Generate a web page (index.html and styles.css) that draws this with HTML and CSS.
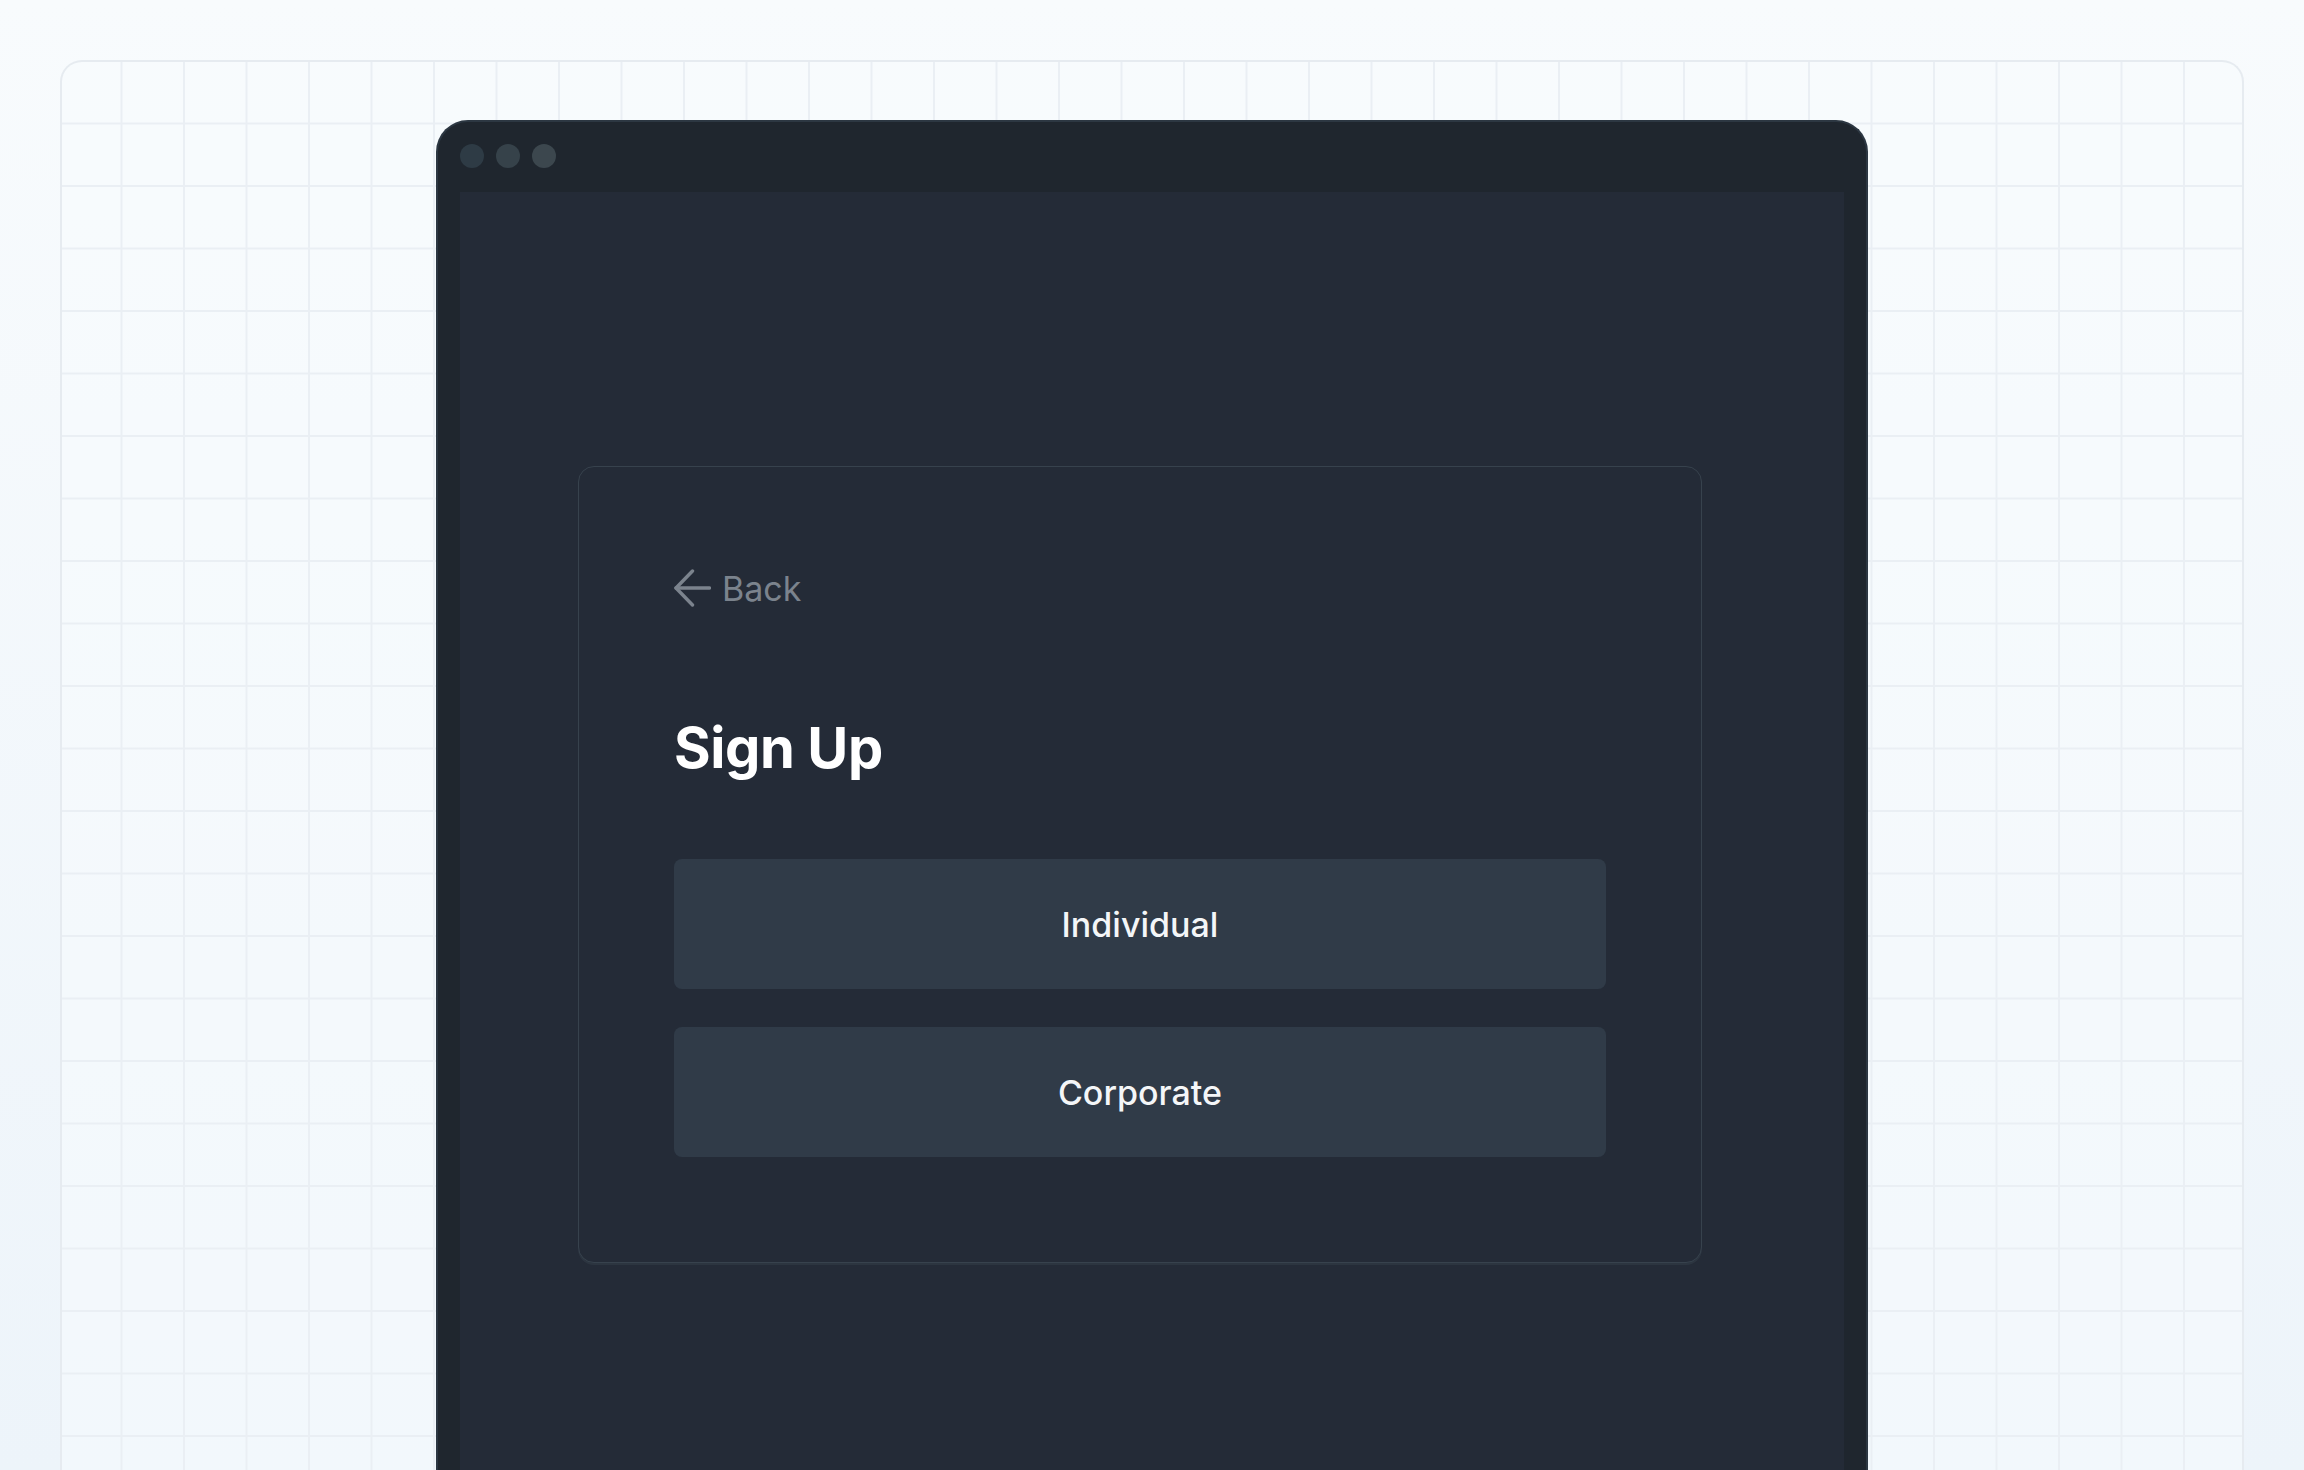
FILE: index.html
```html
<!DOCTYPE html>
<html lang="en">
<head>
<meta charset="utf-8">
<title>Sign Up</title>
<link rel="stylesheet" href="styles.css">
</head>
<body>
<div class="canvas">
  <div class="device">
    <div class="titlebar">
      <span class="dot dot-1"></span>
      <span class="dot dot-2"></span>
      <span class="dot dot-3"></span>
    </div>
    <div class="screen">
      <div class="card">
        <a class="back" href="#">
          <svg class="back-icon" width="37" height="38" viewBox="0 0 37 38" fill="none" stroke="currentColor" stroke-width="3.4" stroke-linecap="round" stroke-linejoin="round">
            <path d="M35.5 19H2"/>
            <path d="M18.5 2L2 19L18.5 36"/>
          </svg>
          <span>Back</span>
        </a>
        <h1 class="title">Sign Up</h1>
        <div class="options">
          <button class="option">Individual</button>
          <button class="option">Corporate</button>
        </div>
      </div>
    </div>
  </div>
</div>
</body>
</html>
```
FILE: styles.css
```css
* { box-sizing: border-box; }

html, body {
  margin: 0;
  height: 1470px;
  overflow: hidden;
}

body {
  background: linear-gradient(180deg, #f8fbfd 0%, #edf4fa 100%);
  font-family: Inter, "Noto Sans", "Liberation Sans", sans-serif;
}

.canvas {
  margin: 60px 60px 0;
  height: 1410px;
  border: 2px solid #e6ebf0;
  border-bottom: none;
  border-radius: 22px 22px 0 0;
  padding-top: 58px;
  background-color: rgba(248, 251, 253, 0.5);
  background-image:
    linear-gradient(to right, transparent calc(100% - 2px), #eaeff4 calc(100% - 2px)),
    linear-gradient(to bottom, transparent calc(100% - 2px), #eaeff4 calc(100% - 2px));
  background-size: 62.5px 62.5px;
  background-position: -2px 0;
}

.device {
  width: 1432px;
  margin: 0 auto;
  height: 1350px;
  background: #1f262e;
  border: 2px solid #2c3742;
  border-bottom: none;
  border-radius: 32px 32px 0 0;
  display: flex;
  flex-direction: column;
}

.titlebar {
  height: 70px;
  flex: none;
  display: flex;
  align-items: center;
  gap: 12px;
  padding: 0 22px 2px;
}

.dot {
  width: 24px;
  height: 24px;
  border-radius: 50%;
}
.dot-1 { background: #2e3b45; }
.dot-2 { background: #36424a; }
.dot-3 { background: #3c474e; }

.screen {
  flex: 1;
  margin: 0 22px;
  background: #242b37;
  padding-top: 274px;
  padding-left: 118px;
}

.card {
  width: 1124px;
  border: 1px solid #37424d;
  border-radius: 16px;
  padding: 95px 95px 105px;
  background: #242b37;
  box-shadow: 0 2px 0 rgba(60, 72, 84, 0.35);
}

.back {
  display: flex;
  align-items: center;
  gap: 11px;
  height: 52px;
  color: #7b838d;
  text-decoration: none;
  font-size: 34px;
  font-weight: 400;
}

.back-icon {
  display: block;
  flex: none;
}

.title {
  margin: 101px 0 0;
  font-size: 56px;
  line-height: 67px;
  font-weight: 700;
  color: #ffffff;
  letter-spacing: -0.4px;
}

.options {
  margin-top: 77px;
  display: flex;
  flex-direction: column;
  gap: 38px;
}

.option {
  height: 130px;
  border: none;
  border-radius: 8px;
  background: #303b48;
  color: #f4f6f8;
  font-family: inherit;
  font-size: 34px;
  font-weight: 500;
  cursor: pointer;
}
```
